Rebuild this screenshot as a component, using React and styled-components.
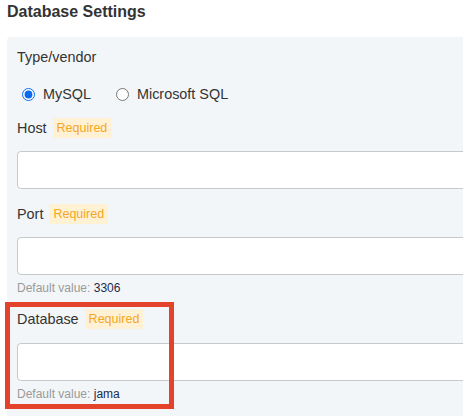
import React from "react";
import styled, { createGlobalStyle } from "styled-components";

const Global = createGlobalStyle`
  html, body { margin: 0; padding: 0; background: #fff; }
  body { font-family: "Liberation Sans", Arial, sans-serif; overflow: hidden; }
`;

const Page = styled.div`
  width: 463px;
  height: 416px;
  overflow: hidden;
  padding: 2px 0 0 7px;
  box-sizing: border-box;
`;

const Title = styled.h2`
  margin: 0;
  font-size: 16px;
  line-height: 20px;
  font-weight: bold;
  color: #333;
`;

const Panel = styled.div`
  margin-top: 15px;
  width: 600px;
  min-height: 420px;
  background: #f3f6f8;
  border-top-left-radius: 4px;
  padding: 10px 0 0 10px;
  box-sizing: border-box;
  display: flex;
  flex-direction: column;
`;

const Label = styled.div`
  font-size: 14.4px;
  line-height: 20px;
  height: 20px;
  color: #333;
  display: flex;
  align-items: center;
  gap: 6px;
`;

const RadioRow = styled.div`
  margin-top: 17px;
  display: flex;
  align-items: center;
  gap: 20px;
  height: 20px;
`;

const RadioOption = styled.label`
  display: flex;
  align-items: center;
  font-size: 14.4px;
  line-height: 20px;
  color: #333;
  gap: 8px;
  input {
    margin: 0 0 0 5px;
    width: 13px;
    height: 13px;
    accent-color: #0b6bf0;
  }
`;

const Field = styled.div`
  position: relative;
  margin-top: ${(p) => p.$top}px;
  display: flex;
  flex-direction: column;
`;

const Highlight = styled.div`
  position: absolute;
  left: -12px;
  top: -7px;
  width: 169px;
  height: 107px;
  border: 5px solid #e4432b;
  box-sizing: border-box;
  pointer-events: none;
`;

const Badge = styled.span`
  background: #fff1d4;
  color: #f5a623;
  font-size: 12.5px;
  line-height: 20px;
  height: 20px;
  padding: 0 4px;
`;

const Input = styled.input`
  margin-top: ${(p) => p.$top || 13}px;
  height: 38px;
  width: 560px;
  box-sizing: border-box;
  border: 1px solid #c6cacd;
  border-radius: 4px;
  background: #fff;
  outline: none;
  padding: 0 10px;
  font-family: inherit;
  font-size: 14px;
`;

const Hint = styled.div`
  margin-top: 5px;
  font-size: 12px;
  line-height: 16px;
  color: #9a9a9a;
  b {
    font-weight: normal;
    color: #1c2a4d;
  }
`;

const fields = [
  { name: "Host", top: 14 },
  { name: "Port", top: 15, def: "3306" },
  { name: "Database", top: 13, def: "jama", highlight: true, inputTop: 14 },
];

export default function App() {
  return (
    <>
      <Global />
      <Page>
        <Title>Database Settings</Title>
        <Panel>
          <Label>Type/vendor</Label>
          <RadioRow>
            <RadioOption>
              <input type="radio" name="vendor" defaultChecked />
              MySQL
            </RadioOption>
            <RadioOption>
              <input type="radio" name="vendor" />
              Microsoft SQL
            </RadioOption>
          </RadioRow>
          {fields.map((f) => (
            <Field key={f.name} $top={f.top}>
              <Label>
                {f.name}
                <Badge>Required</Badge>
              </Label>
              <Input $top={f.inputTop} />
              {f.def && (
                <Hint>
                  Default value: <b>{f.def}</b>
                </Hint>
              )}
              {f.highlight && <Highlight />}
            </Field>
          ))}
        </Panel>
      </Page>
    </>
  );
}
